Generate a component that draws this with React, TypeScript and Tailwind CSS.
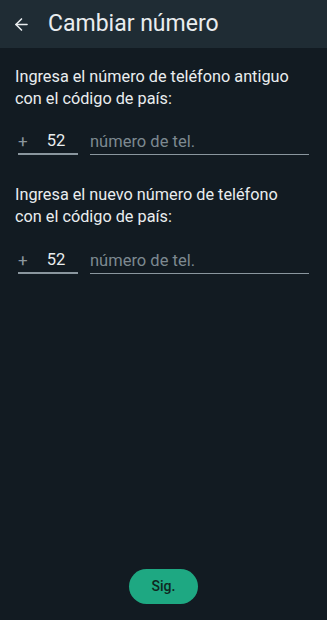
import { ArrowLeft } from "lucide-react";

function PhoneRow() {
  return (
    <div className="flex items-end gap-3 pl-[3px] pr-[3px]">
      <div className="flex w-[60px] items-center border-b-2 border-[#8a969e] pb-[1px]">
        <span className="text-[17px] leading-[22px] text-[#8a969e]">+</span>
        <span className="ml-[19px] text-[16.5px] leading-[22px] text-[#e9edef]">52</span>
      </div>
      <div className="flex flex-1 items-center border-b-[1.5px] border-[#8a969e] pb-[1.5px]">
        <span className="text-[16.5px] leading-[22px] text-[#7d8990]">número de tel.</span>
      </div>
    </div>
  );
}

export default function App() {
  return (
    <div
      className="flex h-[620px] w-[327px] flex-col bg-[#121b22]"
      style={{ fontFamily: "Roboto, 'Liberation Sans', sans-serif" }}
    >
      {/* Header */}
      <div className="flex h-12 shrink-0 items-center bg-[#1f2c34]">
        <ArrowLeft size={19} strokeWidth={2} className="ml-[12px] text-[#e9edef]" />
        <h1 className="ml-[17px] text-[23px] font-normal text-[#e9edef]">Cambiar número</h1>
      </div>

      <div className="flex flex-col px-[15px] pt-[18px]">
        <p className="pr-[14px] text-[16.25px] leading-[22px] text-[#e9edef]">
          Ingresa el número de teléfono antiguo con el código de país:
        </p>
        <div className="mt-[20px]">
          <PhoneRow />
        </div>

        <p className="mt-[29px] pr-[14px] text-[16.25px] leading-[22px] text-[#e9edef]">
          Ingresa el nuevo número de teléfono con el código de país:
        </p>
        <div className="mt-[21px]">
          <PhoneRow />
        </div>
      </div>

      <div className="flex-1" />

      <div className="flex justify-center pb-[16px]">
        <button className="h-[35px] w-[69px] rounded-full bg-[#1ea882] text-[14px] font-medium text-[#0f2620]">
          Sig.
        </button>
      </div>
    </div>
  );
}
